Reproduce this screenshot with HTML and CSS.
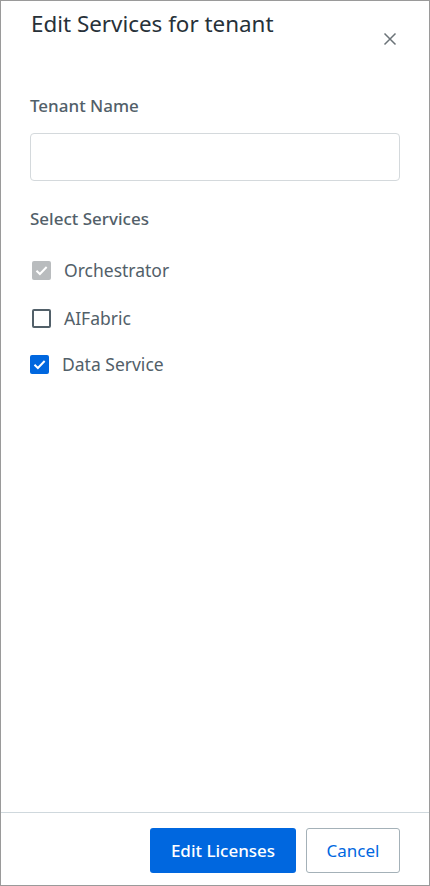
FILE: index.html
```html
<!DOCTYPE html>
<html>
<head>
<meta charset="utf-8">
<link rel="stylesheet" href="styles.css">
</head>
<body>
<div class="panel">
  <div class="header">
    <h1 class="title">Edit Services for tenant</h1>
    <button class="close" aria-label="Close">
      <svg width="14" height="14" viewBox="0 0 14 14"><path d="M1.5 1.5 L12.5 12.5 M12.5 1.5 L1.5 12.5" stroke="#6b7378" stroke-width="1.5" fill="none"/></svg>
    </button>
  </div>
  <div class="content">
    <div class="label">Tenant Name</div>
    <input class="input" type="text">
    <div class="label services-label">Select Services</div>
    <div class="options">
      <label class="option">
        <span class="box box-disabled"><svg width="15" height="15" viewBox="0 0 14 14"><path d="M2.3 7.2 L5.5 10.3 L11.8 3.7" stroke="#fff" stroke-width="1.8" fill="none"/></svg></span>
        <span class="opt-text">Orchestrator</span>
      </label>
      <label class="option">
        <span class="box box-empty"></span>
        <span class="opt-text">AIFabric</span>
      </label>
      <label class="option option-shift">
        <span class="box box-checked"><svg width="15" height="15" viewBox="0 0 14 14"><path d="M2.3 7.2 L5.5 10.3 L11.8 3.7" stroke="#fff" stroke-width="1.8" fill="none"/></svg></span>
        <span class="opt-text">Data Service</span>
      </label>
    </div>
  </div>
  <div class="footer">
    <button class="btn btn-primary">Edit Licenses</button>
    <button class="btn btn-secondary">Cancel</button>
  </div>
</div>
</body>
</html>
```
FILE: styles.css
```css
* { box-sizing: border-box; }
html, body { margin: 0; padding: 0; background: #fff; }
body { font-family: "Noto Sans", "Open Sans", sans-serif; }
.panel {
  width: 430px;
  height: 886px;
  border: 1px solid #9a9a9a;
  display: flex;
  flex-direction: column;
  background: #fff;
}
.header {
  display: flex;
  justify-content: space-between;
  align-items: flex-start;
  padding: 8px 27px 0 30px;
}
.title {
  margin: 0;
  font-size: 22.4px;
  line-height: 30px;
  font-weight: 400;
  color: #273139;
}
.close {
  border: 0;
  background: none;
  padding: 0;
  margin-top: 18px;
  width: 24px;
  height: 24px;
  display: flex;
  align-items: center;
  justify-content: center;
  cursor: pointer;
}
.content {
  flex: 1;
  padding: 44px 29px 0 29px;
  display: flex;
  flex-direction: column;
}
.label {
  font-size: 17px;
  line-height: 22px;
  font-weight: 500;
  color: #526069;
}
.input {
  margin-top: 16px;
  height: 48px;
  width: 100%;
  border: 1px solid #d4d9dc;
  border-radius: 4px;
  font-family: inherit;
  font-size: 16px;
}
.services-label { margin-top: 27px; }
.options {
  margin-top: 29px;
  display: flex;
  flex-direction: column;
  gap: 26px;
}
.option {
  display: flex;
  align-items: center;
  gap: 13px;
  height: 22px;
  padding-left: 2px;
}
.option-shift { padding-left: 0; margin-top: -2px; }
.box {
  width: 19px;
  height: 19px;
  border-radius: 2px;
  display: flex;
  align-items: center;
  justify-content: center;
  flex: none;
}
.box-disabled { background: #b9bcbe; }
.box-empty { border: 2px solid #526069; }
.box-checked { background: #0067df; }
.opt-text {
  font-size: 17.5px;
  color: #526069;
}
.footer {
  border-top: 1px solid #cfd8dd;
  padding: 15px 29px 12px;
  display: flex;
  justify-content: flex-end;
  gap: 10px;
}
.btn {
  height: 45px;
  font-family: inherit;
  font-size: 17px;
  border-radius: 3px;
  cursor: pointer;
}
.btn-primary {
  width: 146px;
  background: #0067df;
  color: #fff;
  border: 0;
  font-weight: 500;
}
.btn-secondary {
  width: 94px;
  background: #fff;
  color: #0067df;
  border: 1px solid #a4b1b8;
}
```
